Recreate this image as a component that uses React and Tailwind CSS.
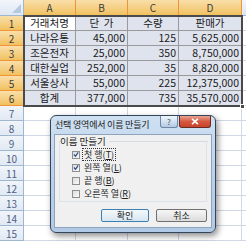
import React from "react";

const colWidths = ["w-[24px]", "w-[52px]", "w-[52px]", "w-[51px]", "w-[63px]"];

const data = [
  ["거래처명", "단  가", "수량", "판매가"],
  ["나라유통", "45,000", "125", "5,625,000"],
  ["조은전자", "25,000", "350", "8,750,000"],
  ["대한실업", "252,000", "35", "8,820,000"],
  ["서울상사", "55,000", "225", "12,375,000"],
  ["합계", "377,000", "735", "35,570,000"],
];

const font = "font-['Malgun_Gothic','Noto_Sans_CJK_KR',sans-serif]";

function HeaderRow() {
  return (
    <div className="flex h-[16px]">
      <div className="w-[24px] shrink-0 relative border-r border-b border-[#9eb6ce] bg-gradient-to-b from-[#f3f6fb] to-[#dfe7f2]">
        <div className="absolute right-[2px] bottom-[2px] w-0 h-0 border-l-[9px] border-l-transparent border-b-[9px] border-b-[#b5c9e1]" />
      </div>
      {["A", "B", "C", "D"].map((c, i) => (
        <div
          key={c}
          className={`${colWidths[i + 1]} shrink-0 flex items-center justify-center border-r border-b border-[#f29536] bg-gradient-to-b from-[#f9dfa9] to-[#f1c15f] text-[10px] text-[#3b3b3b]`}
        >
          {c}
        </div>
      ))}
      <div className="flex-1 border-b border-[#9eb6ce] bg-gradient-to-b from-[#f3f6fb] to-[#dfe7f2]" />
    </div>
  );
}

function Row({ n, cells }) {
  const sel = n <= 6;
  return (
    <div className="flex h-[15px]">
      <div
        className={`w-[24px] shrink-0 flex items-center justify-center border-r border-b text-[10px] ${
          sel
            ? "border-[#f29536] bg-gradient-to-b from-[#f9dfa9] to-[#f1c15f] text-[#3b3b3b]"
            : "border-[#9eb6ce] bg-gradient-to-b from-[#f1f5fa] to-[#e1e9f4] text-[#4d6185]"
        }`}
      >
        {n}
      </div>
      {[0, 1, 2, 3].map((i) => {
        const v = cells ? cells[i] : "";
        const center = i === 0 || n === 1;
        return (
          <div
            key={i}
            className={`${colWidths[i + 1]} shrink-0 flex items-center border-r border-b px-[2px] text-[10.5px] leading-none text-[#1a1a1a] whitespace-pre ${
              center ? "justify-center" : "justify-end"
            } ${
              cells
                ? `border-[#9a9a9a] ${n === 1 && i === 0 ? "bg-white" : "bg-[#dfe3ed]"}`
                : "border-[#d0d7e5] bg-white"
            }`}
          >
            {v}
          </div>
        );
      })}
      <div className="flex-1 border-b border-[#d0d7e5] bg-white" />
    </div>
  );
}

function Check({ checked, label, mnemonic, focus }) {
  return (
    <div className="flex items-center h-[13px] gap-[3px]">
      <div className="w-[8px] h-[8px] border border-[#8e8f8f] bg-gradient-to-br from-[#dcdcdc] to-[#fbfbfb] flex items-center justify-center">
        {checked && (
          <svg width="7" height="7" viewBox="0 0 7 7">
            <path d="M1 3.5 L3 5.5 L6 1" stroke="#2a4e8c" strokeWidth="1.4" fill="none" />
          </svg>
        )}
      </div>
      <div
        className={`flex items-center h-[11px] text-[9px] leading-[11px] text-[#1e1e1e] px-[1px] whitespace-pre ${
          focus ? "outline outline-1 outline-dotted outline-[#333]" : ""
        }`}
      >
        <span>{label}(</span>
        <span className="underline">{mnemonic}</span>
        <span>)</span>
      </div>
    </div>
  );
}

function Dialog() {
  return (
    <div
      className={`absolute left-[50px] top-[115px] w-[166px] h-[118px] rounded-[6px] border border-[#34465c] bg-gradient-to-b from-[#cfe0f2] via-[#bcd2ea] to-[#b1c9e4] shadow-[2px_3px_6px_rgba(0,0,0,0.45)] flex flex-col px-[3px] pb-[4px] ${font}`}
    >
      <div className="h-[18px] shrink-0 flex items-start justify-between">
        <span className="pl-[1px] pt-[4px] text-[9px] leading-none text-[#1b1b1b] tracking-[-0.2px]">선택 영역에서 이름 만들기</span>
        <div className="flex gap-[1px] mr-[1px]">
          <div className="w-[18px] h-[12px] rounded-b-[3px] border border-t-0 border-[#6d87a6] bg-gradient-to-b from-[#eef4fa] via-[#d3e1f0] to-[#b3c9e2] flex items-center justify-center text-[8px] leading-none text-[#3a4f6a]">
            ?
          </div>
          <div className="w-[32px] h-[12px] rounded-b-[3px] border border-t-0 border-[#6b2a22] bg-gradient-to-b from-[#e9a392] via-[#d4573f] to-[#c8432c] flex items-center justify-center">
            <svg width="8" height="7" viewBox="0 0 8 7">
              <path d="M1 0.8 L7 6.2 M7 0.8 L1 6.2" stroke="white" strokeWidth="1.6" />
            </svg>
          </div>
        </div>
      </div>
      <div className="flex-1 border border-[#8ea3bd] bg-[#f0f0f0] flex flex-col px-[3px] pt-[1px]">
        <div className="flex items-center gap-[3px]">
          <span className="pl-[2px] text-[9.5px] leading-[10px] text-[#1e1e1e]">이름 만들기</span>
          <div className="flex-1 h-px bg-[#d5dbe0] mt-[1px]" />
        </div>
        <div className="flex flex-col pl-[12px] border-x border-b border-[#dde2e6] mx-[1px] -mt-[5px] pt-[7px] pb-[1px]">
          <Check checked label="첫 행" mnemonic="T" focus />
          <Check checked label="왼쪽 열" mnemonic="L" />
          <Check label="끝 행" mnemonic="B" />
          <Check label="오른쪽 열" mnemonic="R" />
        </div>
        <div className="flex justify-end gap-[7px] mt-[7px] pr-[1px]">
          <div className="w-[48px] h-[13px] rounded-[2px] border border-[#3c7fb1] bg-gradient-to-b from-[#f4f8fb] to-[#d7e6f1] flex items-center justify-center text-[9px] leading-none text-[#1b1b1b]">
            확인
          </div>
          <div className="w-[51px] h-[13px] rounded-[2px] border border-[#707070] bg-gradient-to-b from-[#f6f6f6] to-[#dcdcdc] flex items-center justify-center text-[9px] leading-none text-[#1b1b1b]">
            취소
          </div>
        </div>
      </div>
    </div>
  );
}

export default function App() {
  return (
    <div className={`relative w-[246px] h-[241px] overflow-hidden bg-white ${font}`}>
      <HeaderRow />
      {Array.from({ length: 15 }, (_, i) => (
        <Row key={i} n={i + 1} cells={data[i]} />
      ))}
      <div className="absolute left-[23px] top-[15px] w-[220px] h-[92px] border-2 border-[#4a4a4a] pointer-events-none" />
      <div className="absolute left-[240px] top-[104px] w-[5px] h-[5px] bg-[#4a4a4a] border border-white" />
      <Dialog />
    </div>
  );
}
